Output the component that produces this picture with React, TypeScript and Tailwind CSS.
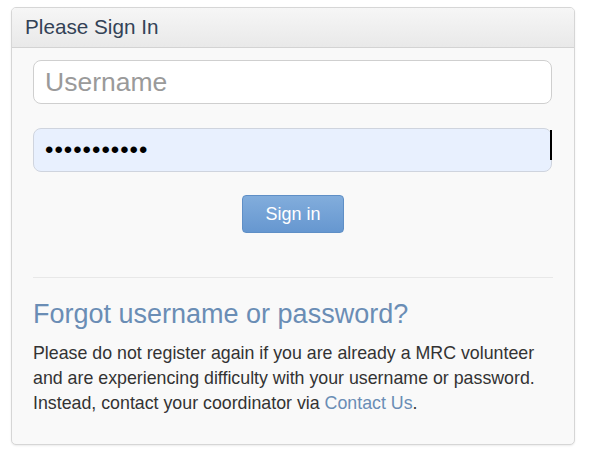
export default function App() {
  return (
    <div className="w-[593px] h-[468px] bg-white pt-[7px] pl-[11px] font-['Liberation_Sans',Arial,sans-serif]">
      <div className="w-[564px] h-[438px] rounded-[5px] border border-[#d6d6d6] bg-[#f9f9f9] shadow-[0_1px_2px_rgba(0,0,0,0.08)] overflow-hidden">
        <div className="h-[40px] border-b border-[#d3d3d3] bg-gradient-to-b from-[#f6f6f6] to-[#e9e9e9] pl-[13px] flex items-center">
          <h3 className="text-[20.7px] text-[#334256] leading-none">Please Sign In</h3>
        </div>
        <div className="px-[21px] pt-[12px]">
          <input
            type="text"
            placeholder="Username"
            className="block w-[519px] h-[44px] rounded-[8px] border border-[#cfcfcf] bg-white px-[11px] text-[26.5px] text-[#555] placeholder:text-[#9a9a9a] outline-none"
          />
          <div className="relative mt-[24px]">
            <input
              type="password"
              defaultValue="abcdefghijk"
              className="block w-[519px] h-[44px] rounded-[8px] border border-[#cfd4de] bg-[#e8f0fe] px-[11px] text-[24px] text-black tracking-[1px] outline-none"
            />
            <span className="absolute right-[1px] top-[2px] h-[30px] w-[2px] bg-black" />
          </div>
          <div className="flex justify-center mt-[23px]">
            <button className="w-[102px] h-[38px] rounded-[4px] border border-[#5f8fc6] bg-gradient-to-b from-[#82addc] to-[#6697d0] text-white text-[18px]">
              Sign in
            </button>
          </div>
          <hr className="mt-[44px] border-t border-[#e8e8e8]" />
          <h2 className="mt-[20px] text-[27px] leading-[32px] text-[#6a8db5]">Forgot username or password?</h2>
          <p className="mt-[11px] w-[512px] text-[17.8px] leading-[25px] text-[#333]">
            Please do not register again if you are already a MRC volunteer and are experiencing difficulty with your
            username or password. Instead, contact your coordinator via{" "}
            <a href="#" className="text-[#6a8db5]">Contact Us</a>.
          </p>
        </div>
      </div>
    </div>
  );
}
